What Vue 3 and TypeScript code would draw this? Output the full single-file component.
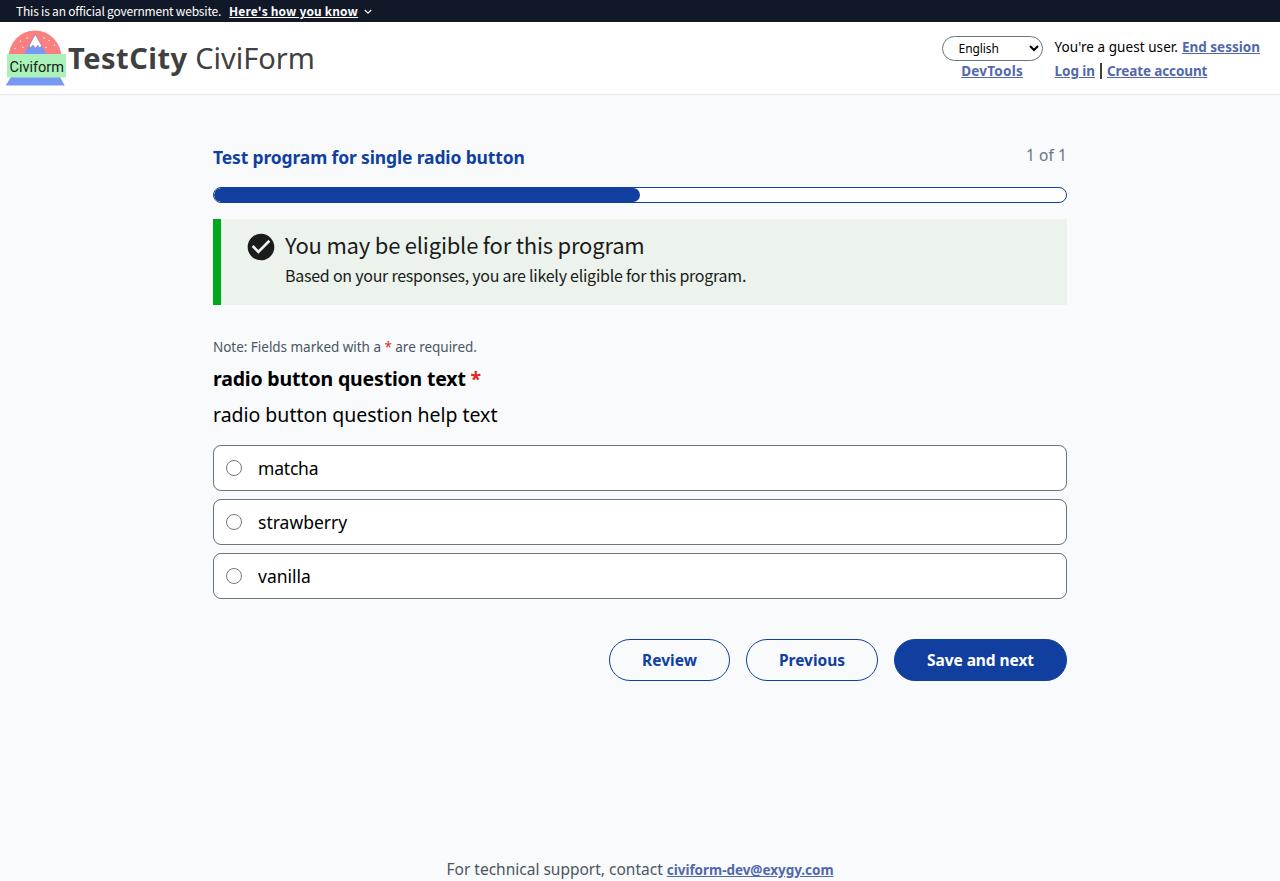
<script setup lang="ts">
import { ref } from 'vue'

const language = ref('English')
const answer = ref('')
const progress = 50
const options = ['matcha', 'strawberry', 'vanilla']
</script>

<template>
  <div class="page">
    <div class="banner">
      <span class="banner-text">This is an official government website.</span>
      <a class="banner-link" href="#">Here's how you know</a>
      <svg class="chevron" viewBox="0 0 8 6"><path d="M0.8 1 L4 4.2 L7.2 1" /></svg>
    </div>

    <header class="header">
      <div class="brand">
        <svg class="logo" viewBox="0 0 62 57" role="img" aria-label="Civiform">
          <path d="M2.500 28 A26.500 27.500 0 0 1 55.500 28 Z" fill="#fa8080" />
          <path d="M29.300 4 L41.500 26 H17 Z" fill="#7799f3" />
          <path d="M29.300 4.500 L35.500 15.500 L34 18 L31.800 15.300 L29.300 18.200 L27 15 L24.300 17.800 L23.300 15.500 Z" fill="#fff" stroke="#98707a" stroke-width="0.500" />
          <g fill="#fff" opacity="0.850">
            <circle cx="14.500" cy="11" r="0.800" /><circle cx="21" cy="8" r="0.800" />
            <circle cx="9" cy="18.500" r="0.800" /><circle cx="17" cy="17.500" r="0.800" />
            <circle cx="38" cy="8" r="0.800" /><circle cx="43" cy="10.500" r="0.800" />
            <circle cx="40" cy="17.500" r="0.800" /><circle cx="48.500" cy="15" r="0.800" />
          </g>
          <path d="M5.500 46 H53.500 L58.700 55.500 H-0.300 Z" fill="#7799f3" />
          <rect x="1" y="24" width="59" height="23.500" fill="#aaf2b9" />
          <text x="3.500" y="41.500" textLength="54.500" lengthAdjust="spacingAndGlyphs" class="logo-text">Civiform</text>
        </svg>
        <h1 class="brand-name"><b>TestCity</b> CiviForm</h1>
      </div>
      <div class="account">
        <div class="tools">
          <select v-model="language" class="language" aria-label="Language">
            <option>English</option>
          </select>
          <a class="link devtools" href="#">DevTools</a>
        </div>
        <div class="session">
          <div class="session-row"><span class="guest">You're a guest user.</span><a class="link end" href="#">End session</a></div>
          <div class="session-row"><a class="link login" href="#">Log in</a><span class="bar"></span><a class="link create" href="#">Create account</a></div>
        </div>
      </div>
    </header>

    <main class="main">
      <div class="heading">
        <h2 class="program">Test program for single radio button</h2>
        <span class="count">1 of 1</span>
      </div>
      <div class="track"><div class="fill" :style="{ width: progress + '%' }"></div></div>

      <section class="alert">
        <svg class="check" viewBox="0 0 24 24"><path d="M12 2C6.480 2 2 6.480 2 12s4.480 10 10 10 10-4.480 10-10S17.520 2 12 2zm-2 15-5-5 1.410-1.410L10 14.170l7.590-7.590L19 8l-9 9z" /></svg>
        <div>
          <h3 class="alert-title">You may be eligible for this program</h3>
          <p class="alert-text">Based on your responses, you are likely eligible for this program.</p>
        </div>
      </section>

      <p class="note">Note: Fields marked with a <span class="star">*</span> are required.</p>
      <div class="question">radio button question text <span class="star">*</span></div>
      <div class="help">radio button question help text</div>

      <div class="options">
        <label v-for="option in options" :key="option" class="option">
          <input v-model="answer" type="radio" name="answer" :value="option" />
          <span>{{ option }}</span>
        </label>
      </div>

      <div class="actions">
        <button class="btn review">Review</button>
        <button class="btn previous">Previous</button>
        <button class="btn primary">Save and next</button>
      </div>
    </main>

    <footer class="footer"><span class="support">For technical support, contact</span><a class="link mail" href="#">civiform-dev@exygy.com</a></footer>
  </div>
</template>

<style>
body { margin: 0; background: #f8fafc; }
</style>

<style scoped>
* { box-sizing: border-box; }
.page {
  height: 881px; display: flex; flex-direction: column; overflow: hidden;
  background: #f8fafc; color: #000; font-family: "Noto Sans", sans-serif; line-height: 1.5;
}
h1, h2, h3, p { margin: 0; font-weight: 400; white-space: nowrap; }
.banner {
  flex: none; height: 22px; padding-left: 16px; display: flex; align-items: center;
  background: #111827; color: #fff; font: 12px/22px "Noto Sans CJK SC", sans-serif;
}
.banner-text { letter-spacing: -0.2px; }
.banner-link { margin-left: 8px; color: #fff; font-weight: 700; letter-spacing: 0.160px; }
.chevron { width: 8px; height: 6px; margin: 2px 0 0 6px; fill: none; stroke: #fff; stroke-width: 1.300; }
.header {
  flex: none; height: 73px; display: flex; justify-content: space-between;
  background: #fff; border-bottom: 1px solid #e5e7eb;
}
.brand { display: flex; padding: 8px 0 0 6px; }
.logo { width: 62px; height: 57px; overflow: visible; }
.logo-text { font: 15px Roboto, sans-serif; fill: #10241a; }
.brand-name { font-size: 29px; line-height: 56px; color: #404040; }
.brand-name b { letter-spacing: 0.500px; }
.account { display: flex; padding: 13px 20px 0 0; gap: 12px; }
.tools { width: 101px; padding-top: 1px; display: flex; flex-direction: column; align-items: center; }
.language {
  width: 101px; height: 25px; padding: 0 0 0 12px; border: 1px solid #6b7280; border-radius: 13px;
  background: #fff; color: #000; font: 12px "Noto Sans", sans-serif; letter-spacing: -0.100px;
}
.link { color: #5268aa; font-size: 13.500px; font-weight: 700; line-height: 20px; text-decoration: underline; }
.devtools { letter-spacing: 0.250px; }
.session-row { display: flex; align-items: center; height: 24px; font-size: 13.500px; white-space: nowrap; }
.guest { letter-spacing: 0.060px; }
.end { margin-left: 4px; }
.login { letter-spacing: -0.070px; }
.create { letter-spacing: -0.110px; }
.bar { width: 2px; height: 16px; margin: 0 5px; background: #404040; }
.main { flex: 1; width: 854px; margin: 0 auto; padding-top: 48px; }
.heading { display: flex; justify-content: space-between; height: 44px; }
.program { color: #113f9f; font-size: 17.500px; font-weight: 700; line-height: 28px; letter-spacing: -0.140px; }
.count { color: #6b7280; font-size: 15.500px; line-height: 25px; letter-spacing: 0.100px; }
.track { height: 16px; border: 1px solid #113f9f; border-radius: 8px; background: #fff; overflow: hidden; }
.fill { height: 100%; background: #113f9f; border-radius: 8px; }
.alert {
  display: flex; height: 86px; margin-top: 16px; padding-left: 24px; border-left: 8px solid #00a91c;
  background: #ecf3ec; color: #1b1b1b; font-family: "Noto Sans CJK SC", sans-serif;
}
.check { width: 32px; height: 32px; margin: 12px 8px 0 0; fill: #1b1b1b; }
.alert-title { margin-top: 9px; font-size: 22px; line-height: 32px; letter-spacing: -0.210px; }
.alert-text { margin-top: 1px; font-size: 16px; line-height: 28px; letter-spacing: -0.250px; }
.note { margin-top: 32px; color: #4b5563; font-size: 13.500px; line-height: 20px; letter-spacing: -0.030px; }
.star { color: #dc2626; }
.question { margin-top: 8px; font-size: 19.500px; font-weight: 700; line-height: 28px; letter-spacing: -0.180px; }
.help { margin-top: 8px; font-size: 19.500px; line-height: 28px; letter-spacing: -0.020px; }
.options { display: flex; flex-direction: column; gap: 8px; margin-top: 16px; }
.option {
  display: flex; align-items: center; height: 46px; padding-left: 12px;
  border: 1px solid #6b7280; border-radius: 8px; background: #fff; font-size: 17.500px;
}
.option:first-child { letter-spacing: -0.200px; }
.option input { width: 16px; height: 16px; margin: 0 16px 0 0; }
.actions { display: flex; justify-content: flex-end; gap: 16px; margin-top: 40px; }
.btn {
  height: 42px; padding: 0; border: 1px solid #113f9f; border-radius: 21px; background: transparent;
  color: #113f9f; font: 700 15.500px "Noto Sans", sans-serif;
}
.review { width: 121px; }
.previous { width: 132px; }
.primary { width: 173px; background: #113f9f; color: #fff; letter-spacing: -0.080px; }
.footer { flex: none; display: flex; justify-content: center; align-items: center; height: 24px; padding-top: 2px; white-space: nowrap; }
.support { color: #4b5563; font-size: 15.500px; margin-right: 4px; }
.mail { letter-spacing: -0.030px; }
</style>
